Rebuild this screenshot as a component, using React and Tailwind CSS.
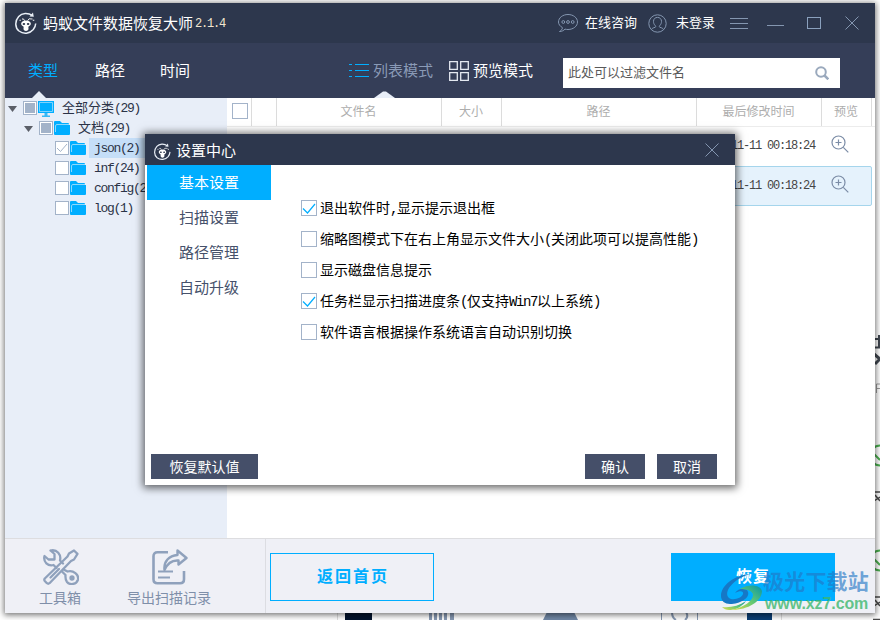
import React, { useState } from 'react';
import clsx from 'clsx';

const FILE_TYPES = [
  { id: 'all', level: 0, label: '全部分类(29)', icon: 'monitor', state: 'partial' },
  { id: 'doc', level: 1, label: '文档(29)', icon: 'folder', state: 'partial' },
  { id: 'json', level: 2, label: 'json(2)', icon: 'folder', state: 'checked' },
  { id: 'inf', level: 2, label: 'inf(24)', icon: 'folder', state: 'empty' },
  { id: 'config', level: 2, label: 'config(2)', icon: 'folder', state: 'empty' },
  { id: 'log', level: 2, label: 'log(1)', icon: 'folder', state: 'empty' },
];

const INDENT = ['pl-[3px]', 'pl-[19px]', 'pl-[35px]'];

const COLUMNS = [
  { title: '', width: 'w-[25px]' },
  { title: '文件名', width: 'w-[165px]' },
  { title: '大小', width: 'w-[60px]' },
  { title: '路径', width: 'w-[195px]' },
  { title: '最后修改时间', width: 'w-[125px]' },
  { title: '预览', width: 'w-[50px]' },
];

const SECTIONS = ['基本设置', '扫描设置', '路径管理', '自动升级'];

const OPTIONS = [
  { label: '退出软件时,显示提示退出框', checked: true },
  { label: '缩略图模式下在右上角显示文件大小(关闭此项可以提高性能)', checked: false },
  { label: '显示磁盘信息提示', checked: false },
  { label: '任务栏显示扫描进度条(仅支持Win7以上系统)', checked: true },
  { label: '软件语言根据操作系统语言自动识别切换', checked: false },
];

// Latin runs are set in a tightened mono face so that each letter is half an em wide
function Label({ text }) {
  return text.split(/([\x21-\x7e][\x20-\x7e]*)/).map((part, i) =>
    i % 2 ? (
      <span key={i} className="font-['Liberation_Mono'] tracking-[-0.1em]">{part}</span>
    ) : (
      part
    )
  );
}

function Logo({ className }) {
  return (
    <svg className={className} viewBox="0 0 22 22" fill="none">
      <path d="M17.500 3.700C13 .3 7 .7 3.700 4.500-.3 9-.2 15.500 4 19c4.500 3.500 10.800 2.700 14.300-1.500 1.500-1.900 2.300-4 2.400-6" stroke="#e8eef6" strokeWidth="1.500" />
      <path d="m14.500 4.600 4.300.2L18 .5z" fill="#e8eef6" />
      <path d="M9.600 8.800 8.500 7M12.600 8.800 14 6.800l3.500.2" stroke="#fff" strokeWidth=".9" />
      <path d="M7 7h1.500M4.500 8.200h1.300M17.800 8.200h1.500" stroke="#fff" strokeWidth="1.100" />
      <path d="M6.200 11.200C6.700 9.400 8.700 8.500 11 8.500s4.300.9 4.800 2.700c.4 1.500-1 2.700-2.500 3.600l.2 1.500c.2 1.700-1 2.700-2.500 2.700s-2.700-1-2.500-2.700l.2-1.500c-1.500-.9-2.900-2.100-2.500-3.600z" fill="#fff" />
      <ellipse cx="8.900" cy="12" rx="1.300" ry=".9" fill="#2d374d" />
      <ellipse cx="13.100" cy="12" rx="1.300" ry=".9" fill="#2d374d" />
    </svg>
  );
}

function TreeIcon({ type }) {
  if (type === 'monitor') {
    return (
      <svg className="mt-px h-4 w-4" viewBox="0 0 16 16">
        <path d="M0 0h16v12H0z" fill="#00aeff" />
        <path d="M1.500 1.500h13v9h-13z" fill="#00aeff" stroke="#7fd2fb" />
        <path d="M6.500 12h3v2.500H12V16H4v-1.500h2.500z" fill="#37b8f5" />
      </svg>
    );
  }
  return (
    <svg className="h-4 w-4" viewBox="0 0 16 16">
      <path d="M0 2q0-1 1-1h5l2 2h6q1 0 1 1v1h1v9q0 1-1 1H1q-1 0-1-1z" fill="#00aeff" />
      <path d="M1.500 12V6q0-1.500 1.500-1.500h12" fill="none" stroke="#8fd8fb" />
    </svg>
  );
}

function TreeCheck({ state }) {
  return (
    <span className="flex h-3.5 w-3.5 shrink-0 items-center justify-center border border-[#a3b3c9] bg-white">
      {state === 'partial' && <span className="h-2.5 w-2.5 bg-[#a3b3c9]" />}
      {state === 'checked' && (
        <svg className="h-3 w-3" viewBox="0 0 12 12" fill="none">
          <path d="m1 6 3.500 3.500L11 2" stroke="#a3b3c9" />
        </svg>
      )}
    </span>
  );
}

function TitleBar() {
  return (
    <div className="flex h-10 items-center bg-[#2d374d] pl-2.5 text-white">
      <Logo className="h-[22px] w-[22px]" />
      <span className="mt-px ml-1.5 w-[152px] text-[15px] leading-5">蚂蚁文件数据恢复大师</span>
      <span className="mt-0.5 font-['Liberation_Mono'] text-[12px] leading-4 tracking-[-1.2px] text-[#f3e6cf]">2.1.4</span>
      <div className="ml-auto flex items-center text-[13px]">
        <svg className="h-5 w-5" viewBox="0 0 20 20" fill="none" stroke="#8496b0">
          <path d="M4.500 14.700C2 13.200.5 11.300.5 9 .5 4.800 4.700 1.500 10 1.500S19.500 4.800 19.500 9s-4.200 7.500-9.500 7.500c-1 0-2-.1-3-.4-1.300 1.500-3 2.300-5.500 2.400 1.800-1 2.800-2.200 3-3.800z" />
          <circle cx="5.300" cy="9" r="1.400" />
          <circle cx="10" cy="9" r="1.400" />
          <circle cx="14.700" cy="9" r="1.400" />
        </svg>
        <span className="-mt-px ml-[7px] w-[63px] leading-5">在线咨询</span>
        <svg className="h-[19px] w-[19px]" viewBox="0 0 19 19" fill="none" stroke="#8496b0">
          <circle cx="9.500" cy="9.500" r="8.700" />
          <path d="M3.400 15.600c.6-1.200 1.600-1.700 3.800-2.300.6-.2.600-1 .2-1.500C6 10.400 5.500 9 5.500 7.400c0-2.400 1.600-4 4-4s4 1.600 4 4c0 1.600-.5 3-1.900 4.400-.4.500-.4 1.300.2 1.500 2.200.6 3.200 1.100 3.800 2.300" />
        </svg>
        <span className="-mt-px ml-[9px] w-[54px] leading-5">未登录</span>
        <svg className="h-3 w-[18px]" viewBox="0 0 18 12" stroke="#8496b0">
          <path d="M0 1.500h18M0 6.500h18M0 11.500h18" />
        </svg>
        <svg className="ml-[19px] h-3.5 w-[17px]" viewBox="0 0 17 14" stroke="#8496b0">
          <path d="M0 9.500h17" />
        </svg>
        <span className="ml-[23px] h-3 w-3.5 border border-[#8aa0bd]" />
        <svg className="mr-4 ml-6 h-[14px] w-[14px]" viewBox="0 0 14 14" stroke="#8496b0">
          <path d="m.5.500 13 13M13.500.5l-13 13" />
        </svg>
      </div>
    </div>
  );
}

function Toolbar() {
  return (
    <div className="flex h-[55px] items-stretch bg-[#353e58] pl-[23px] text-[15px] text-white">
      <div className="relative w-[67px] pt-[18px] leading-5 text-[#00aeff]">
        类型
        <svg className="absolute bottom-0 left-1 h-[7px] w-[14px]" viewBox="0 0 14 7" fill="#e8eef8">
          <path d="m0 7 7-7 7 7z" />
        </svg>
      </div>
      <div className="w-[65px] pt-[18px] leading-5">路径</div>
      <div className="w-[188px] pt-[18px] leading-5">时间</div>
      <div className="relative flex w-[101px] pt-[18px] leading-5 text-[#8a9ab6]">
        <svg className="mt-0.5 mr-1 ml-px h-[15px] w-5" viewBox="0 0 20 15" stroke="#00aeff">
          <path d="M0 1.500h3M6 1.500h14M0 7.500h3M6 7.500h14M0 13.500h3M6 13.500h14" />
        </svg>
        列表模式
        <svg className="absolute bottom-0 left-[26px] h-[7px] w-[21px]" viewBox="0 0 21 7" fill="#e8eef8">
          <path d="M0 7 9 .500h3L21 7z" />
        </svg>
      </div>
      <div className="flex w-[114px] pt-[18px] leading-5">
        <svg className="mr-1 h-5 w-5" viewBox="0 0 20 20" fill="none" stroke="#e4e9f1" strokeWidth="1.300">
          <path d="M.7.700h7.600v7.600H.7zM11.700.7h7.600v7.600h-7.600zM.7 11.700h7.600v7.600H.7zM11.700 11.700h7.600v7.600h-7.600z" />
        </svg>
        预览模式
      </div>
      <div className="mt-[15px] flex h-[30px] w-[277px] items-center justify-between bg-white pr-[11px] pl-[5px] text-[13px] leading-5 text-[#595959]">
        <span className="-mt-px">此处可以过滤文件名</span>
        <svg className="h-3.5 w-3.5" viewBox="0 0 14 14" fill="none" stroke="#9aa9bd" strokeWidth="2">
          <circle cx="6" cy="6" r="4.800" />
          <path d="m9.500 9.500 3.800 3.800" strokeWidth="2.500" />
        </svg>
      </div>
    </div>
  );
}

function Tree() {
  return (
    <div className="w-[222px] bg-[#e8eef8] text-[13px] text-[#2b3347]">
      {FILE_TYPES.map((node) => (
        <div key={node.id} className={clsx('flex h-5 items-center', INDENT[node.level])}>
          <svg className="mt-0.5 mr-1.5 h-[6px] w-[9px]" viewBox="0 0 9 6">
            {node.level < 2 && <path d="M0 0h9L4.500 6z" fill="#5b5f68" />}
          </svg>
          <TreeCheck state={node.state} />
          <span className="ml-px">
            <TreeIcon type={node.icon} />
          </span>
          <span
            className={clsx(
              'ml-[3px] h-5 pr-2 pl-[5px] leading-5 whitespace-nowrap',
              node.id === 'json' && 'bg-[#c5def8]'
            )}
          >
            <Label text={node.label} />
          </span>
        </div>
      ))}
    </div>
  );
}

function FileRow({ time, selected }) {
  return (
    <div
      className={clsx(
        'flex h-10 w-[645px] items-center justify-end rounded-[2px] border pr-[22px]',
        selected ? 'border-[#a5d5ec] bg-[#e5f2fc]' : 'border-transparent'
      )}
    >
      <span className="mr-4 font-['Liberation_Mono'] text-[12px] tracking-[-1.2px] text-[#454545]">{time}</span>
      <svg className="-mt-1 h-[18px] w-[18px]" viewBox="0 0 18 18" fill="none" stroke="#7b8ca6" strokeWidth="1.200">
        <circle cx="7.500" cy="7.500" r="6.500" />
        <path d="m12.300 12.300 5 5M4.500 7.500h6M7.500 4.500v6" />
      </svg>
    </div>
  );
}

function FileTable() {
  return (
    <div className="flex-1 bg-white">
      <div className="flex h-[29px] border-b border-[#ececec] text-[12px] text-[#adadad]">
        <div className="w-[25px] border-r border-[#dcdcdc] pt-[5px] pl-[5px]">
          <div className="h-4 w-4 border border-[#a3b3c9]" />
        </div>
        {COLUMNS.map((col, i) => (
          <div key={i} className={clsx('border-r border-[#dcdcdc] pr-px text-center leading-[29px]', col.width)}>
            {col.title}
          </div>
        ))}
      </div>
      <div className="-mt-px">
        <FileRow time="2021-11-11 00:18:24" />
        <FileRow time="2021-11-11 00:18:24" selected />
      </div>
    </div>
  );
}

function BottomBar() {
  return (
    <div className="flex h-[75px] border-t border-[#dddde0] bg-[#eff0f6] text-[14px] text-[#7f8fa9]">
      <div className="flex w-[261px] border-r border-[#dcdde2] pt-2.5 leading-5">
        <div className="ml-[34px] flex w-[42px] flex-col items-center">
          <svg className="ml-0.5 h-9 w-9" viewBox="0 0 36 36" fill="none" stroke="#8fa1bc" strokeWidth="2.300" strokeLinejoin="round" strokeLinecap="round">
            <path d="M7.500 1.500 11.500 5v5.500H5.500L1.500 7C0 13 5 17.500 10.500 16l3 3M20 14.500l-3-3C18.500 5.500 14 0 7.500 1.500" />
            <path d="M1.800 29.500 24.500 7.500 26 4.500l5-3 3.500 3.300-3.500 5.700-3 1.500L6.500 34.200q-1.300 1-2.600 0l-2.100-2.200q-1-1.200 0-2.500z" />
            <path d="m7.500 28.500 8.500-8.500" />
            <path d="m20.500 20.500 4 2c6-1.500 11.500 3 10.500 8-1.500 5-8 6-11 2.500-2-2.500-1.500-4.500-1.500-7l-3.500-3.500" />
            <circle cx="29" cy="29" r="1.500" fill="#8fa1bc" />
          </svg>
          <span className="mt-[3px] whitespace-nowrap">工具箱</span>
        </div>
        <div className="ml-[46px] flex w-[84px] flex-col items-center">
          <svg className="ml-0.5 h-9 w-9" viewBox="0 0 36 36" fill="none" stroke="#8fa1bc" strokeWidth="2.600">
            <path d="M16 3.300H5.500q-4 0-4 4v23q0 4 4 4H28q4 0 4-4V22" />
            <path d="M12.500 21C11.500 12.500 17 6.500 25.500 6V1.500L34.500 9l-8 6.500v-4c-6-.5-11 2.500-14 9.500z" strokeWidth="2.400" strokeLinejoin="round" />
            <path d="M6 22.500h15M6 28.500h12" strokeWidth="2.200" />
          </svg>
          <span className="mt-[3px] whitespace-nowrap">导出扫描记录</span>
        </div>
      </div>
      <button className="mt-[14px] ml-1 h-12 w-[164px] border border-[#00aeff] pl-0.5 text-[16px] font-bold tracking-[2px] text-[#00aeff]">
        返回首页
      </button>
      <button className="mt-[14px] mr-10 ml-auto h-12 w-[164px] bg-[#00aeff] text-[16px] font-bold tracking-[1px] text-white">
        恢复
      </button>
    </div>
  );
}

function SettingsDialog() {
  const [section, setSection] = useState(0);
  const [options, setOptions] = useState(OPTIONS);

  const toggle = (index) => {
    setOptions(options.map((o, i) => (i === index ? { ...o, checked: !o.checked } : o)));
  };

  return (
    <div className="absolute top-[134px] left-[145px] flex h-[351px] w-[590px] flex-col bg-white shadow-[0_1px_8px_2px_rgba(0,0,0,0.6)]">
      <div className="flex h-[31px] items-center bg-[#2d374d] pr-4 pl-[9px] text-[15px] text-white">
        <Logo className="mt-1 h-[17px] w-[17px]" />
        <span className="mt-[3px] ml-[5px] leading-5">设置中心</span>
        <svg className="ml-auto h-[14px] w-[14px]" viewBox="0 0 14 14" stroke="#8496b0">
          <path d="m.5.500 13 13M13.500.5l-13 13" />
        </svg>
      </div>
      <div className="flex flex-1">
        <div className="ml-0.5 w-[124px] text-[15px]">
          {SECTIONS.map((name, i) => (
            <div
              key={name}
              onClick={() => setSection(i)}
              className={clsx(
                'h-[35px] text-center leading-[36px]',
                section === i ? 'bg-[#00aeff] text-white' : 'text-[#46516b]'
              )}
            >
              {name}
            </div>
          ))}
        </div>
        <div className="flex flex-col gap-[15px] pt-[35px] pl-[30px] text-[14px] text-black">
          {options.map((option, i) => (
            <div key={option.label} className="flex h-4 items-center" onClick={() => toggle(i)}>
              <span className="flex h-4 w-4 items-center justify-center border border-[#a3b3c9]">
                {option.checked && (
                  <svg className="h-3.5 w-3.5" viewBox="0 0 14 14" fill="none">
                    <path d="m1 7.500 4.500 4.500L13 3" stroke="#00aeff" strokeWidth="1.200" />
                  </svg>
                )}
              </span>
              <span className="ml-[3px] h-4 leading-[17px] whitespace-nowrap">
                <Label text={option.label} />
              </span>
            </div>
          ))}
        </div>
      </div>
      <div className="flex px-1.5 pb-1.5 text-[14px] text-white">
        <button className="h-[25px] w-[107px] bg-[#454f69] pt-0.5">恢复默认值</button>
        <button className="ml-auto h-[25px] w-[60px] bg-[#454f69] pt-0.5">确认</button>
        <button className="mr-3 ml-3 h-[25px] w-[60px] bg-[#454f69] pt-0.5">取消</button>
      </div>
    </div>
  );
}

// Parts of the page that show past the window's right and lower edges
function Backdrop() {
  return (
    <svg className="absolute inset-0 h-[620px] w-[880px]" viewBox="0 0 880 620" fill="none">
      <path d="M337.500 612v8M781.500 612v8" stroke="#dedede" />
      <path d="M345 612h27v8h-27z" fill="#03142e" />
      <path d="M747 612h25v8h-25z" fill="#0b3f75" />
      <path d="M429 612h3v8h-3zM434 612h3v8h-3zM439 612h3v8h-3zM444 612h3v8h-3zM450 612h4v8h-4z" fill="#8799b3" />
      <path d="M547 612h27l4 8h-35z" fill="#7188a6" />
      <path d="M661.500 612v8M697.500 612v8" stroke="#8799b3" />
      <path d="M672 612q0 6 4 8M686 612q3 5-1 8" stroke="#8799b3" strokeWidth="2" />
      <path d="M874 339h6M874 347.500h6M879 335v12" stroke="#40464f" strokeWidth="2" />
      <path d="m874 354 6 5-5 5" stroke="#40464f" strokeWidth="3" />
      <path d="M876.500 393v-9h4M876.500 388.500h4" stroke="#9b9b9b" />
      <path d="M880 445.500a10 10 0 0 0 0 20M874 454l6 6M880 550.500a10 10 0 0 0 0 20M874 559l6 6" stroke="#4caf50" strokeWidth="2" />
      <path d="M874 492h6M875 495l5 6M874 501l6-4M874 597h6M875 600l5 6M874 606l6-4M873 619.500h7" stroke="#4a4a4a" strokeWidth="1.500" />
    </svg>
  );
}

function Watermark() {
  return (
    <div className="pointer-events-none absolute top-[569px] left-[720px] flex">
      <svg className="mt-1 h-[38px] w-[44px]" viewBox="0 0 44 38" fill="none">
        <defs>
          <linearGradient id="wmTail" x1="0" y1="1" x2="1" y2="0">
            <stop offset="0" stopColor="#e5dc4a" />
            <stop offset=".5" stopColor="#62c873" />
            <stop offset="1" stopColor="#0795a5" />
          </linearGradient>
        </defs>
        <path d="M30 1C15 2 1 12 1 23c0 5 4 8 9 8 10 0 20-6 18-12-1-5-10-4-13 1 5-3 9-2 8 1-1 4-10 7-14 4C3 19 13 6 30 1z" fill="#1678c6" />
        <path d="M20 16c9-6 21-4 22 2 0 10-14 19-30 19 12-3 21-9 21-15 0-4-6-6-13-6z" fill="url(#wmTail)" />
        <path d="M2 34c8 1 17-1 24-6-5 7-12 9-17 9-3 0-5-1-7-3z" fill="url(#wmTail)" />
      </svg>
      <div className="-ml-px whitespace-nowrap">
        <div className="text-[21px] leading-[25px] font-bold tracking-[0.2px] text-[#2276c5]/65">极光下载站</div>
        <div className="mt-px ml-0.5 font-['Liberation_Sans'] text-[16px] leading-[17px] font-bold tracking-[-0.1px] text-[#3cb76c]/80">www.xz7.com</div>
      </div>
    </div>
  );
}

export default function App() {
  return (
    <div className="relative h-[620px] w-[880px] overflow-hidden bg-white pt-[3px] pl-[5px] font-['Liberation_Sans','Noto_Sans_CJK_SC',sans-serif]">
      <Backdrop />
      <div className="relative flex h-[610px] w-[870px] flex-col shadow-[0_1px_6px_1px_rgba(0,0,0,0.55)]">
        <TitleBar />
        <Toolbar />
        <div className="flex flex-1">
          <Tree />
          <FileTable />
        </div>
        <BottomBar />
      </div>
      <SettingsDialog />
      <Watermark />
    </div>
  );
}
